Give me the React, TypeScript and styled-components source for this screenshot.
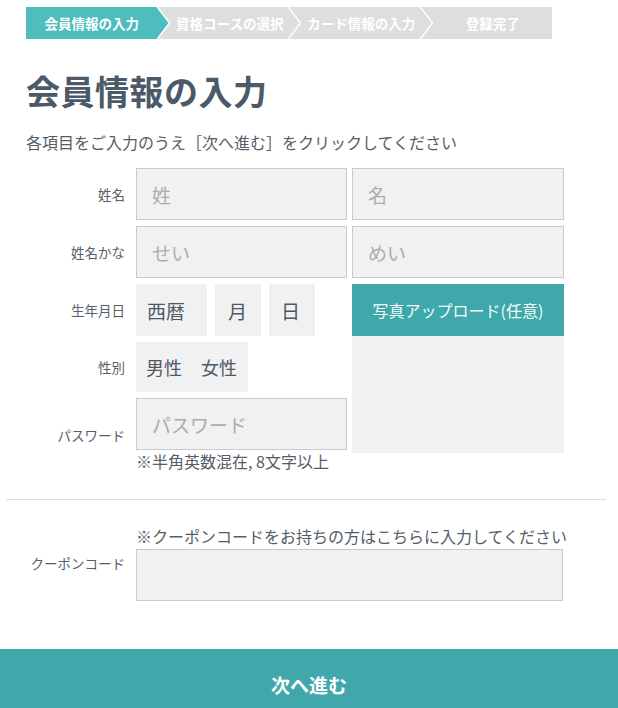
import React from 'react';
import styled, { createGlobalStyle } from 'styled-components';

const GlobalStyle = createGlobalStyle`
  html, body {
    margin: 0;
    padding: 0;
    background: #ffffff;
    font-family: "Noto Sans CJK JP", "Noto Sans", sans-serif;
    color: #4e5864;
  }
  * {
    box-sizing: border-box;
  }
`;

const Page = styled.div`
  width: 618px;
  height: 708px;
  overflow: hidden;
  padding-top: 7px;
`;

const Steps = styled.ol`
  display: flex;
  width: 526px;
  height: 32px;
  margin: 0 0 0 26px;
  padding: 0;
  list-style: none;
  background: #dedede;
`;

const Step = styled.li<{ $active?: boolean; $first?: boolean }>`
  position: relative;
  flex: 0 0 131.5px;
  display: flex;
  align-items: center;
  justify-content: center;
  padding-left: ${(p) => (p.$first ? '0' : '13px')};
  background: ${(p) => (p.$active ? '#4dbdbe' : 'transparent')};
  color: #ffffff;
  font-size: 13.5px;
  font-weight: 700;
  line-height: 32px;
  white-space: nowrap;
`;

const Chevron = styled.svg`
  position: absolute;
  top: 0;
  right: -14px;
  width: 16px;
  height: 32px;
  z-index: 1;
`;

const Title = styled.h1`
  margin: 31px 0 0 26px;
  font-size: 34px;
  line-height: 41px;
  font-weight: 700;
  color: #4b5968;
  letter-spacing: 0.5px;
`;

const Lead = styled.p`
  margin: 19px 0 0 26px;
  font-size: 16px;
  line-height: 24px;
  color: #555e68;
`;

const FormGrid = styled.div`
  display: grid;
  grid-template-columns: 105px 211px 212px;
  grid-template-rows: 52px 52px 52px 50px auto;
  column-gap: 5px;
  row-gap: 6px;
  margin: 14px 0 0 26px;
`;

const Label = styled.div<{ $row?: number }>`
  grid-column: 1;
  grid-row: ${(p) => p.$row ?? 'auto'};
  align-self: center;
  padding-right: 6px;
  text-align: right;
  font-size: 13.5px;
  line-height: 20px;
  color: #56606b;
`;

const TextInput = styled.input`
  width: 100%;
  height: 52px;
  margin: 0;
  padding: 0 0 0 15px;
  border: 1px solid #c9c9ce;
  border-radius: 0;
  background: #f1f1f1;
  font-family: inherit;
  font-size: 19px;
  color: #4e5864;
  outline: none;
  &::placeholder {
    color: #acacac;
  }
`;

const Field = styled.div<{ $col?: string; $row?: number }>`
  grid-column: ${(p) => p.$col ?? 'auto'};
  grid-row: ${(p) => p.$row ?? 'auto'};
  display: flex;
  flex-direction: column;
`;

const InlineGroup = styled.div<{ $gap?: number }>`
  grid-column: 2;
  display: flex;
  gap: ${(p) => p.$gap ?? 8}px;
`;

const SelectBox = styled.div<{ $width: number; $pad?: number }>`
  width: ${(p) => p.$width}px;
  height: 52px;
  display: flex;
  align-items: center;
  padding-left: ${(p) => p.$pad ?? 11}px;
  background: #f1f1f1;
  font-size: 19px;
  color: #4e5864;
`;

const GenderBox = styled.div`
  display: flex;
  align-items: center;
  gap: 19px;
  width: 112px;
  height: 50px;
  padding-left: 10px;
  background: #f1f1f1;
  font-size: 18px;
  color: #4e5864;
`;

const PhotoPanel = styled.div`
  grid-column: 3;
  grid-row: 3 / span 3;
  align-self: start;
  height: 169px;
  display: flex;
  flex-direction: column;
  background: #f1f1f1;
`;

const PhotoButton = styled.div`
  height: 52px;
  display: flex;
  align-items: center;
  justify-content: center;
  background: #3fa8aa;
  color: #f4fbfb;
  font-size: 16px;
`;

const Note = styled.div`
  font-size: 16px;
  line-height: 22px;
  color: #555e68;
  white-space: nowrap;
`;

const Divider = styled.hr`
  width: 600px;
  margin: 27px 0 0 6px;
  border: none;
  border-top: 1px solid #dcdcdc;
`;

const CouponGrid = styled.div`
  display: grid;
  grid-template-columns: 105px 427px;
  column-gap: 5px;
  margin: 25px 0 0 26px;
`;

const CouponField = styled.div`
  display: flex;
  flex-direction: column;
  gap: 2px;
`;

const NextButton = styled.button`
  display: block;
  width: 618px;
  height: 70px;
  margin-top: 48px;
  border: none;
  background: #40a8ab;
  color: #ffffff;
  font-family: inherit;
  font-size: 19px;
  font-weight: 700;
  cursor: pointer;
`;

const steps = ['会員情報の入力', '資格コースの選択', 'カード情報の入力', '登録完了'];

const App = () => {
  return (
    <Page>
      <GlobalStyle />
      <Steps>
        {steps.map((s, i) => (
          <Step key={s} $active={i === 0} $first={i === 0}>
            {s}
            {i < steps.length - 1 && (
              <Chevron viewBox="0 0 16 32">
                {i === 0 && <polygon points="0,0 13,16 0,32" fill="#4dbdbe" />}
                <polyline
                  points="0.5,-1 13.5,16 0.5,33"
                  fill="none"
                  stroke="#ffffff"
                  strokeWidth="1.4"
                />
              </Chevron>
            )}
          </Step>
        ))}
      </Steps>

      <Title>会員情報の入力</Title>
      <Lead>各項目をご入力のうえ［次へ進む］をクリックしてください</Lead>

      <FormGrid>
        <Label $row={1}>姓名</Label>
        <Field $col="2" $row={1}>
          <TextInput placeholder="姓" />
        </Field>
        <Field $col="3" $row={1}>
          <TextInput placeholder="名" />
        </Field>

        <Label $row={2}>姓名かな</Label>
        <Field $col="2" $row={2}>
          <TextInput placeholder="せい" />
        </Field>
        <Field $col="3" $row={2}>
          <TextInput placeholder="めい" />
        </Field>

        <Label $row={3}>生年月日</Label>
        <InlineGroup>
          <SelectBox $width={71}>西暦</SelectBox>
          <SelectBox $width={46} $pad={13}>月</SelectBox>
          <SelectBox $width={46} $pad={12}>日</SelectBox>
        </InlineGroup>

        <PhotoPanel>
          <PhotoButton>写真アップロード(任意)</PhotoButton>
        </PhotoPanel>

        <Label $row={4}>性別</Label>
        <InlineGroup>
          <GenderBox>
            <span>男性</span>
            <span>女性</span>
          </GenderBox>
        </InlineGroup>

        <Label $row={5}>パスワード</Label>
        <Field $col="2" $row={5}>
          <TextInput type="text" placeholder="パスワード" />
          <Note>※半角英数混在, 8文字以上</Note>
        </Field>
      </FormGrid>

      <Divider />

      <CouponGrid>
        <Label>クーポンコード</Label>
        <CouponField>
          <Note>※クーポンコードをお持ちの方はこちらに入力してください</Note>
          <TextInput />
        </CouponField>
      </CouponGrid>

      <NextButton>次へ進む</NextButton>
    </Page>
  );
};

export default App;
